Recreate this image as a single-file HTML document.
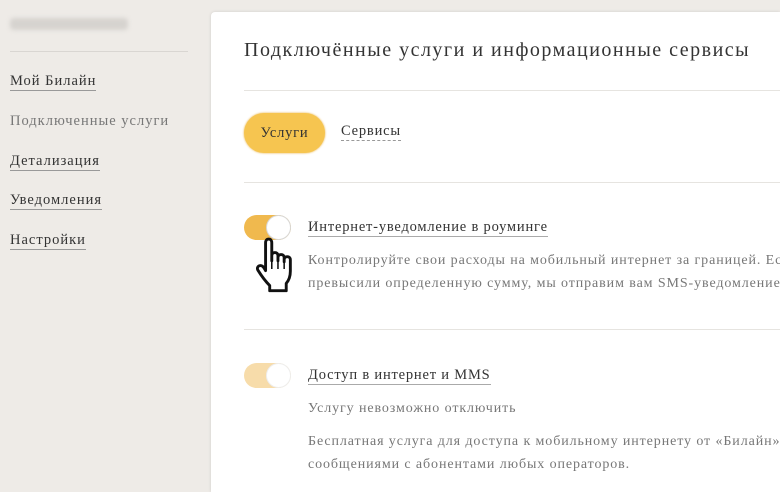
<!DOCTYPE html>
<html><head><meta charset="utf-8"><style>
html,body{margin:0;width:780px;height:492px;overflow:hidden}
body{background:#eeebe7;font-family:"Liberation Serif",serif;color:#333}
#w{position:relative;width:780px;height:492px;overflow:hidden}
.a{position:absolute;white-space:nowrap}
.side a{position:absolute;left:10px;font-size:14.5px;color:#333;text-decoration:none;border-bottom:1px solid #999;line-height:17px;letter-spacing:1px}
.card{position:absolute;left:211px;top:12px;width:569px;height:480px;background:#fff;border-radius:4px 0 0 0;box-shadow:0 0 3px rgba(0,0,0,.12);overflow:hidden}
.line{position:absolute;height:1px;background:#e6e4e0}
.tog{position:absolute;width:47px;height:25px;border-radius:13px;background:#f0b94e}
.tog i{position:absolute;right:0;top:0;width:23px;height:23px;border-radius:50%;background:#fff;border:1px solid #d8d8d8}
.t{font-size:14.5px;color:#333;border-bottom:1px solid #aaa;line-height:17px;letter-spacing:0.8px}
.d{font-size:14px;color:#777;letter-spacing:0.9px}
</style></head><body><div id="w">
<div class="a" style="left:10px;top:18px;width:118px;height:12px;background:#d6d3cf;filter:blur(2px);border-radius:4px"></div>
<div class="line" style="left:10px;top:51px;width:178px;background:#d9d6d2"></div>
<div class="side">
<a style="top:73px">Мой Билайн</a>
<a style="top:113px;color:#777;border:none">Подключенные услуги</a>
<a style="top:153px">Детализация</a>
<a style="top:192px">Уведомления</a>
<a style="top:232px">Настройки</a>
</div>
<div class="card">
<div class="a" style="left:33px;top:27px;font-size:20px;color:#333;letter-spacing:1.5px">Подключённые услуги и информационные сервисы</div>
<div class="line" style="left:33px;top:78px;width:536px"></div>
<div class="a" style="left:33px;top:101px;width:81px;height:40px;border-radius:20px;background:#f6c550;box-shadow:0 0 2px #e8b040;font-size:14.5px;line-height:40px;text-align:center;letter-spacing:0.8px">Услуги</div>
<div class="a" style="left:130px;top:111px;font-size:14.5px;border-bottom:1px dashed #999;line-height:17px;letter-spacing:0.8px">Сервисы</div>
<div class="line" style="left:33px;top:170px;width:536px"></div>
<div class="tog" style="left:33px;top:203px"><i></i></div>
<div class="a t" style="left:97px;top:207px">Интернет-уведомление в роуминге</div>
<div class="a d" style="left:97px;top:241px">Контролируйте свои расходы на мобильный интернет за границей. Если вы</div>
<div class="a d" style="left:97px;top:264px">превысили определенную сумму, мы отправим вам SMS-уведомление.</div>
<svg class="a" style="left:43px;top:224px" width="50" height="64" viewBox="0 0 48 62"><path d="M14 3c2 0 3 1.5 3 3.5V24V19c0-2 1.3-3 3-3s3 1 3 3v5-3c0-2 1.3-3 3-3s3 1 3 3v4-2c0-2 1.3-3 3-3s3 1 3 3v11c0 5-1.5 9-4 12v7H15v-5C11 44 6 37 3.5 33c-1-2 0-4 2-4.3 1.8-.3 3 .7 4 2.3l1.5 2.5V6.5C11 4.5 12 3 14 3z" fill="#fff" stroke="#111" stroke-width="2.8" stroke-linejoin="round"/><path d="M17 24v8M23 24v8M29 25v7" stroke="#111" stroke-width="1.5"/></svg>
<div class="line" style="left:33px;top:317px;width:536px"></div>
<div class="tog" style="left:33px;top:351px;background:#f7dcaa"><i style="border-color:#eee"></i></div>
<div class="a t" style="left:97px;top:355px">Доступ в интернет и MMS</div>
<div class="a d" style="left:97px;top:389px">Услугу невозможно отключить</div>
<div class="a d" style="left:97px;top:422px">Бесплатная услуга для доступа к мобильному интернету от «Билайн» и обмена</div>
<div class="a d" style="left:97px;top:445px">сообщениями с абонентами любых операторов.</div>
</div>
</div></body></html>
